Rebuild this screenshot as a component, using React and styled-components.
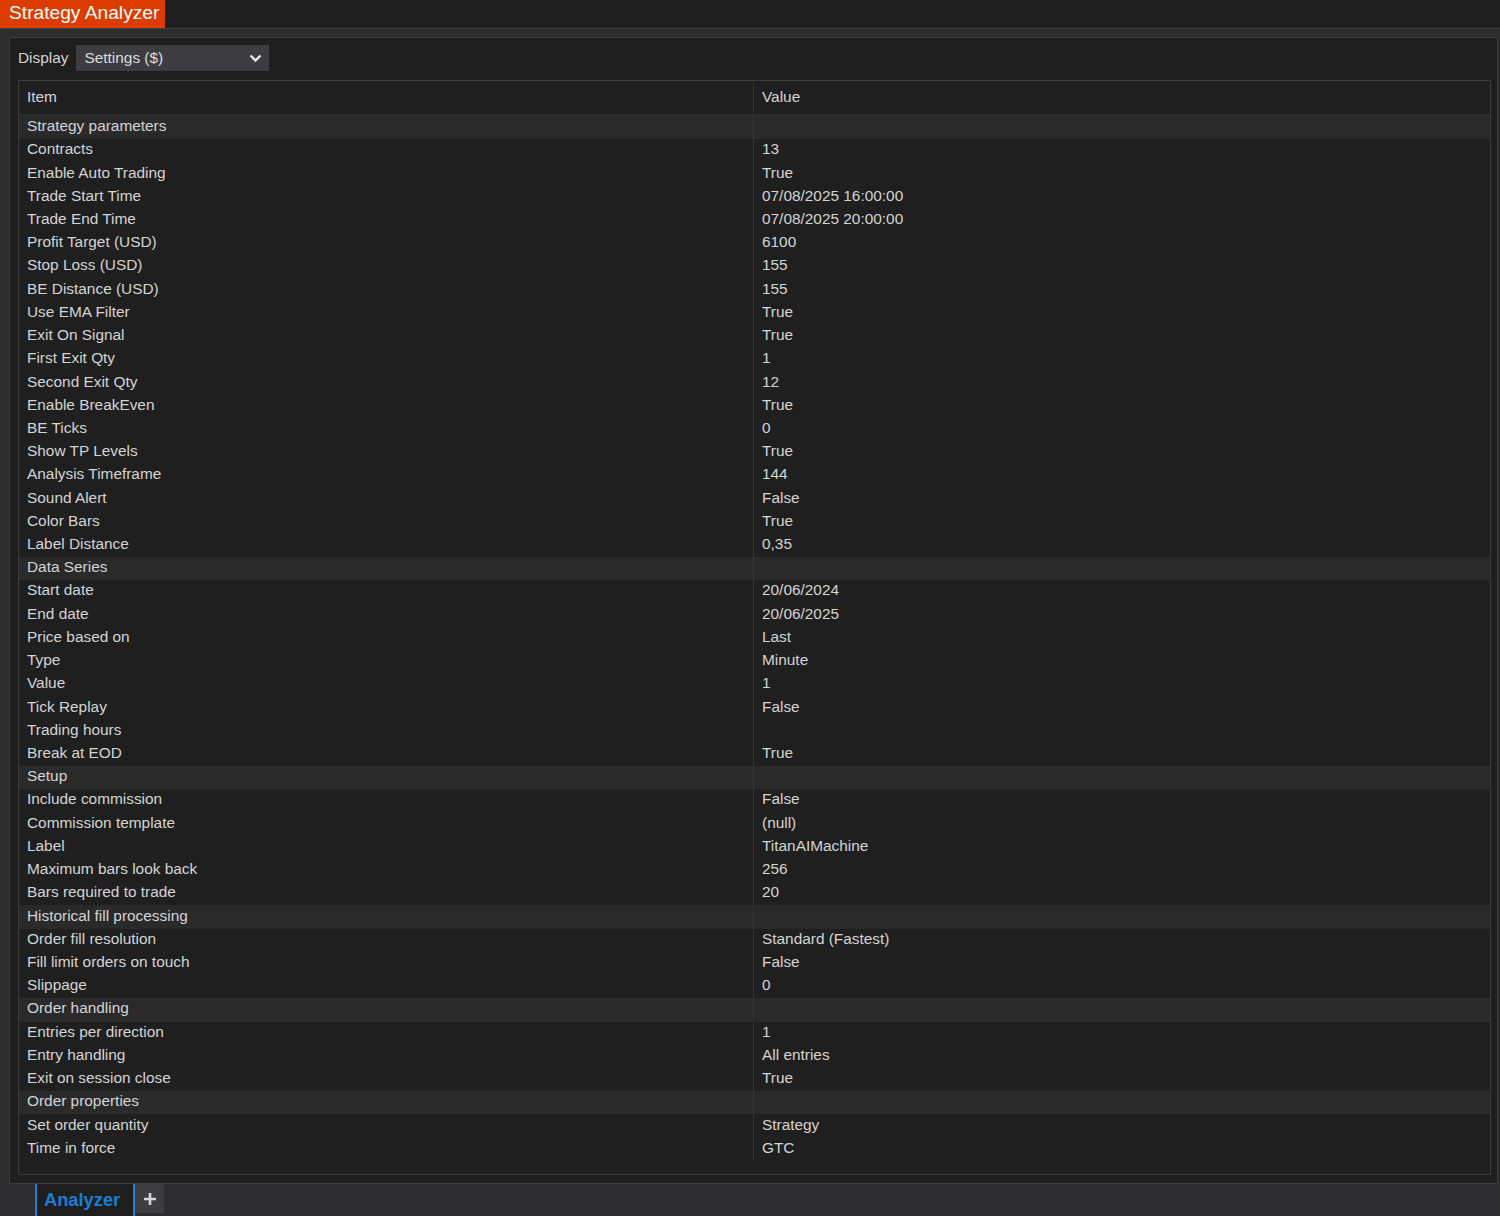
import styled, { createGlobalStyle } from "styled-components";

const rows = [
  ["Strategy parameters", "", true],
  ["Contracts", "13"],
  ["Enable Auto Trading", "True"],
  ["Trade Start Time", "07/08/2025 16:00:00"],
  ["Trade End Time", "07/08/2025 20:00:00"],
  ["Profit Target (USD)", "6100"],
  ["Stop Loss (USD)", "155"],
  ["BE Distance (USD)", "155"],
  ["Use EMA Filter", "True"],
  ["Exit On Signal", "True"],
  ["First Exit Qty", "1"],
  ["Second Exit Qty", "12"],
  ["Enable BreakEven", "True"],
  ["BE Ticks", "0"],
  ["Show TP Levels", "True"],
  ["Analysis Timeframe", "144"],
  ["Sound Alert", "False"],
  ["Color Bars", "True"],
  ["Label Distance", "0,35"],
  ["Data Series", "", true],
  ["Start date", "20/06/2024"],
  ["End date", "20/06/2025"],
  ["Price based on", "Last"],
  ["Type", "Minute"],
  ["Value", "1"],
  ["Tick Replay", "False"],
  ["Trading hours", ""],
  ["Break at EOD", "True"],
  ["Setup", "", true],
  ["Include commission", "False"],
  ["Commission template", "(null)"],
  ["Label", "TitanAIMachine"],
  ["Maximum bars look back", "256"],
  ["Bars required to trade", "20"],
  ["Historical fill processing", "", true],
  ["Order fill resolution", "Standard (Fastest)"],
  ["Fill limit orders on touch", "False"],
  ["Slippage", "0"],
  ["Order handling", "", true],
  ["Entries per direction", "1"],
  ["Entry handling", "All entries"],
  ["Exit on session close", "True"],
  ["Order properties", "", true],
  ["Set order quantity", "Strategy"],
  ["Time in force", "GTC"],
];

const GlobalStyle = createGlobalStyle`
  html, body {
    margin: 0;
    padding: 0;
    background: #2d2d30;
    font-family: "Liberation Sans", Arial, sans-serif;
  }
`;

const Window = styled.div`
  width: 1500px;
  height: 1216px;
  display: flex;
  flex-direction: column;
  background: #2d2d30;
  color: #d4d4d4;
`;

const TitleBar = styled.div`
  height: 28px;
  display: flex;
  background: #1e1e1e;
  border-bottom: 1px solid #3c3c3f;
`;

const TitleTab = styled.div`
  width: 165px;
  background: #dd3c00;
  color: #ffffff;
  font-size: 19.2px;
  line-height: 26px;
  padding-left: 9px;
  box-sizing: border-box;
  white-space: nowrap;
`;

const Body = styled.div`
  flex: 1;
  display: flex;
  padding: 8px 2px 0 9px;
  min-height: 0;
`;

const Panel = styled.div`
  flex: 1;
  display: flex;
  flex-direction: column;
  background: #1e1e1e;
  border: 1px solid #3a3a3d;
  padding: 7px 6px 8px 8px;
`;

const Toolbar = styled.div`
  display: flex;
  align-items: center;
  gap: 8px;
  height: 26px;
  margin-bottom: 9px;
  font-size: 15.4px;
`;

const Select = styled.div`
  width: 193px;
  height: 26px;
  background: #3c3c41;
  display: flex;
  align-items: center;
  justify-content: space-between;
  padding: 0 7px 0 8px;
  box-sizing: border-box;
  font-size: 15.4px;
  color: #dcdcdc;
`;

const Table = styled.div`
  flex: 1;
  border: 1px solid #3c3c3f;
  display: flex;
  flex-direction: column;
  background: #1f1f1f;
`;

const HeaderRow = styled.div`
  display: grid;
  grid-template-columns: 735px 1fr;
  height: 33px;
  border-bottom: 2px solid #2e2e30;
  font-size: 15.4px;
  & > div {
    padding-bottom: 1px;
  }
`;

const Row = styled.div`
  display: grid;
  grid-template-columns: 735px 1fr;
  height: 23.23px;
  font-size: 15.4px;
  background: ${(p) => (p.$category ? "#2a2a2a" : "#1f1f1f")};
  & > div {
    padding-bottom: 3px;
  }
`;

const Cell = styled.div`
  display: flex;
  align-items: center;
  padding-left: 8px;
  box-sizing: border-box;
  white-space: nowrap;
  border-right: ${(p) => (p.$first ? "1px solid #333335" : "none")};
`;

const TabBar = styled.div`
  height: 32px;
  display: flex;
  padding-left: 35px;
  background: #2d2d30;
`;

const Tab = styled.div`
  width: 100px;
  background: #1e1e1e;
  border-left: 2px solid #1f7fd4;
  border-right: 2px solid #1f7fd4;
  color: #1a7fd4;
  font-weight: bold;
  font-size: 18.3px;
  display: flex;
  align-items: center;
  padding-left: 7px;
  box-sizing: border-box;
`;

const AddButton = styled.div`
  width: 29px;
  height: 29px;
  background: #3e3e42;
  display: flex;
  align-items: center;
  justify-content: center;
`;

export default function App() {
  return (
    <>
      <GlobalStyle />
      <Window>
        <TitleBar>
          <TitleTab>Strategy Analyzer</TitleTab>
        </TitleBar>
        <Body>
          <Panel>
            <Toolbar>
              <span>Display</span>
              <Select>
                <span>Settings ($)</span>
                <svg width="13" height="9" viewBox="0 0 13 9">
                  <path d="M1.5 1.5 L6.5 6.5 L11.5 1.5" stroke="#e8e8e8" strokeWidth="2.4" fill="none" />
                </svg>
              </Select>
            </Toolbar>
            <Table>
              <HeaderRow>
                <Cell $first>Item</Cell>
                <Cell>Value</Cell>
              </HeaderRow>
              {rows.map(([item, value, cat]) => (
                <Row key={item} $category={cat}>
                  <Cell $first>{item}</Cell>
                  <Cell>{value}</Cell>
                </Row>
              ))}
            </Table>
          </Panel>
        </Body>
        <TabBar>
          <Tab>Analyzer</Tab>
          <AddButton>
            <svg width="14" height="14" viewBox="0 0 14 14">
              <path d="M7 1 V13 M1 7 H13" stroke="#d8d8d8" strokeWidth="2.6" />
            </svg>
          </AddButton>
        </TabBar>
      </Window>
    </>
  );
}
